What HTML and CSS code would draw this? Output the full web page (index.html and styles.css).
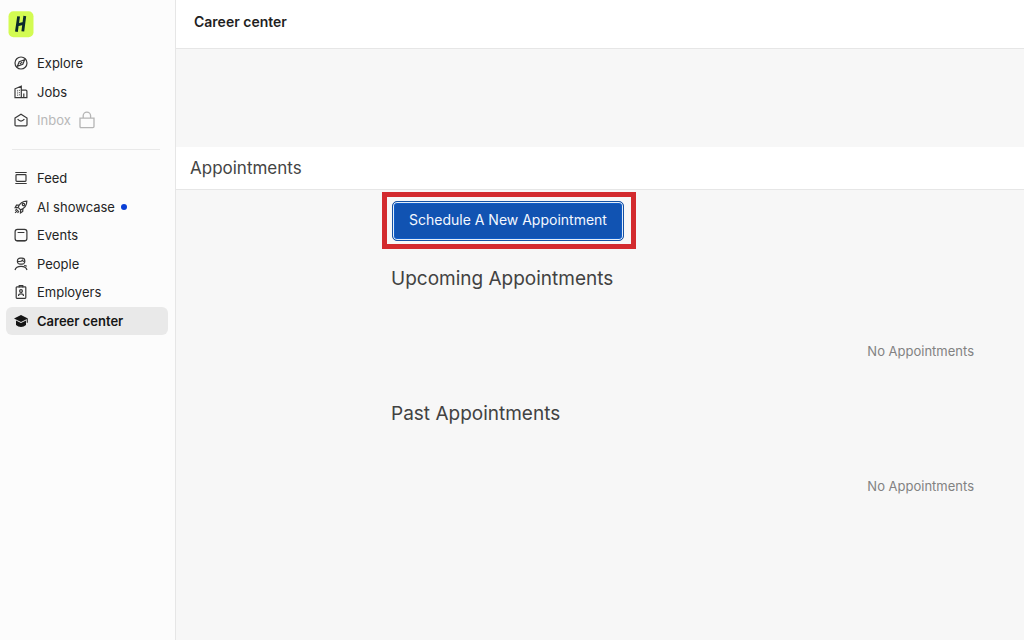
FILE: index.html
```html
<!DOCTYPE html>
<html lang="en">
<head>
<meta charset="utf-8">
<meta name="viewport" content="width=device-width, initial-scale=1">
<title>Career center</title>
<link rel="stylesheet" href="styles.css">
</head>
<body>
<div class="app">
  <aside class="sidebar">
    <a class="logo" href="#" aria-label="Home">
      <svg viewBox="0 0 26 27" width="26" height="27" aria-hidden="true">
        <rect x="0.5" y="0.2" width="25" height="26" rx="5" fill="#d3fb52"/>
        <path d="M10.6 5.4 8.4 20.8M16.8 5 14.8 20.4M8.6 14.2 16.4 12.2" fill="none" stroke="#0b2b2b" stroke-width="2.8"/>
      </svg>
    </a>
    <nav class="nav">
      <ul class="nav-list">
        <li><a class="nav-item" href="#">
          <svg class="icon" viewBox="0 0 14 14"><circle cx="7" cy="7" r="6"/><path d="M10.6 3.8 8.8 8.2 3.4 10.2 5.2 5.8ZM5.8 8 8.2 6.1"/></svg>
          Explore</a></li>
        <li><a class="nav-item" href="#">
          <svg class="icon" viewBox="0 0 14 14"><path d="M1 12.7V3.8L7.3 1.2V12.7ZM7.3 5.2H11.8Q12.9 5.2 12.9 6.3V12.7H7.3M9.8 12.5V8.6"/><path d="M3.6 5.2V10.8M5.4 4.8V10.8" stroke-width="0.8" stroke-dasharray="1.2 1"/></svg>
          Jobs</a></li>
        <li><a class="nav-item is-locked" href="#">
          <svg class="icon" viewBox="0 0 14 14"><path d="M1 5.1 7 1.2 13 5.1V11.8Q13 12.9 11.9 12.9H2.1Q1 12.9 1 11.8ZM3.6 6.1Q7 10 10.4 6.1"/></svg>
          Inbox
          <svg class="lock" viewBox="0 0 16 18"><path d="M1 7.2H15V15.6Q15 16.7 13.9 16.7H2.1Q1 16.7 1 15.6ZM4.2 7V4.8A3.7 3.7 0 0 1 11.6 4.8V7"/></svg></a></li>
      </ul>
      <hr class="divider">
      <ul class="nav-list nav-list-long">
        <li><a class="nav-item" href="#">
          <svg class="icon" viewBox="0 0 14 14"><path d="M1.3 1.5H12.7M1.3 12.5H12.7"/><rect x="2" y="3.7" width="10" height="6.6" rx="0.8"/></svg>
          Feed</a></li>
        <li><a class="nav-item" href="#">
          <svg class="icon" viewBox="0 0 14 14"><path d="M4.1 7.4Q6.6 1.2 12.8 1.2Q13 7.2 6.6 9.9ZM5.3 5 2.5 5.2 1.2 7.6 4.1 7.4M9 8.5 8.7 11.4 6.5 12.9 6.6 9.9M4.2 9.8 1.1 12.9M2.9 9 1.2 10.6M5 11.1 3.5 12.8"/><circle cx="9.5" cy="4.5" r="1.2"/></svg>
          AI showcase <span class="dot" role="img" aria-label="New"></span></a></li>
        <li><a class="nav-item" href="#">
          <svg class="icon" viewBox="0 0 14 14"><rect x="1.1" y="1.3" width="11.8" height="11.6" rx="2.4"/><path d="M3.6 4.5H10.4M2.6 12.7H11.4"/></svg>
          Events</a></li>
        <li><a class="nav-item" href="#">
          <svg class="icon" viewBox="0 0 14 14"><rect x="3.4" y="1.2" width="7.4" height="6" rx="2.8"/><path d="M3.6 4.3Q7.4 5 8.3 3.2Q9 4.4 10.6 4.4M1 13Q2 9.4 7 9.4Q12 9.4 13 13M10.2 8.2 12.8 9.3"/></svg>
          People</a></li>
        <li><a class="nav-item" href="#">
          <svg class="icon" viewBox="0 0 14 14"><rect x="2.2" y="1.9" width="9.6" height="11.4" rx="0.7"/><path d="M5.2 2.4V0.7H8.8V2.4M4.6 11V10.2Q4.6 8.8 7 8.8Q9.4 8.8 9.4 10.2V11"/><circle cx="7" cy="6" r="1.4"/></svg>
          Employers</a></li>
        <li><a class="nav-item is-active" href="#" aria-current="page">
          <svg class="icon" viewBox="0 0 14 14"><path class="solid" d="M7 1 14 4.5 7 8 0 4.5ZM2 6.6 7 9.1 12 6.6V11Q9.8 13.1 7 13.1Q4.2 13.1 2 11Z"/><path d="M13.3 4.8V8.8"/></svg>
          Career center</a></li>
      </ul>
    </nav>
  </aside>
  <main class="main">
    <header class="topbar"><h1 class="topbar-title">Career center</h1></header>
    <div class="subbar"><h2 class="subbar-title">Appointments</h2></div>
    <div class="content">
      <div class="highlight"><button class="primary" type="button">Schedule A New Appointment</button></div>
      <section class="group">
        <h3 class="group-title">Upcoming Appointments</h3>
        <p class="empty">No Appointments</p>
      </section>
      <section class="group">
        <h3 class="group-title">Past Appointments</h3>
        <p class="empty">No Appointments</p>
      </section>
    </div>
  </main>
</div>
</body>
</html>
```
FILE: styles.css
```css
* { box-sizing: border-box; }
body, h1, h2, h3, p, ul { margin: 0; padding: 0; }
body {
  font-family: Inter, "Liberation Sans", sans-serif;
  background: #f7f7f7;
  color: #1f1f1f;
}
.app {
  display: grid;
  grid-template-columns: 176px 1fr;
  min-height: 100vh;
}
.sidebar {
  background: #fcfcfc;
  border-right: 1px solid #e6e6e6;
  padding: 11px 7px 0 6px;
}
.logo {
  display: block;
  width: 26px;
  margin: 0 0 11px 2px;
}
.logo svg { display: block; }
.nav-list {
  display: flex;
  flex-direction: column;
  justify-content: space-between;
  list-style: none;
  height: 85px;
}
.nav-list-long { height: 171px; }
.nav-item {
  display: flex;
  align-items: center;
  height: 28px;
  padding: 0 8px;
  border-radius: 6px;
  font-size: 13px;
  line-height: 16px;
  color: #242424;
  text-decoration: none;
}
.icon {
  width: 14px;
  height: 14px;
  margin-right: 9px;
  fill: none;
  stroke: #383838;
  stroke-width: 1.2;
}
.icon .solid { fill: #141414; stroke: none; }
.is-locked { color: #b8b8b8; }
.lock {
  width: 16px;
  height: 18px;
  margin-left: 8px;
  fill: none;
  stroke: #b5b5b5;
  stroke-width: 1.3;
}
.dot {
  width: 6px;
  height: 6px;
  margin-left: 6px;
  border-radius: 50%;
  background: #0a3fd6;
}
.is-active {
  background: #e9e9e9;
  color: #161616;
  font-weight: 600;
}
.divider {
  height: 1px;
  margin: 15px 8px 14px 6px;
  border: 0;
  background: #e9e9e9;
}
.topbar {
  padding: 14px 18px 18px;
  background: #fff;
  border-bottom: 1px solid #e6e6e6;
}
.topbar-title {
  font-size: 14px;
  line-height: 16px;
  font-weight: 600;
}
.subbar {
  margin-top: 98px;
  padding: 9px 14px;
  background: #fff;
  border-bottom: 1px solid #e6e6e6;
}
.subbar-title {
  font-size: 17px;
  line-height: 24px;
  font-weight: 400;
  color: #444;
}
.content { padding: 2px 50px 40px 206px; }
.highlight {
  display: inline-block;
  padding: 4px 7px 3px 5px;
  border: 5px solid #d32a2e;
  vertical-align: top;
}
.primary {
  display: block;
  padding: 8px 16px 10px;
  border: 1px solid #1551a3;
  border-radius: 5px;
  box-shadow: inset 0 0 0 1px #e3edf9, inset 0 0 0 2px #0d5cc9;
  background: #1153b2;
  color: #f4f8ff;
  font: 400 14px/20px Inter, "Liberation Sans", sans-serif;
}
.group {
  margin-left: 9px;
  padding-top: 18px;
  min-height: 135px;
}
.group-title {
  font-size: 19px;
  line-height: 24px;
  font-weight: 400;
  color: #424242;
}
.empty {
  margin-top: 52px;
  font-size: 13px;
  line-height: 16px;
  color: #828282;
  text-align: right;
}
```
